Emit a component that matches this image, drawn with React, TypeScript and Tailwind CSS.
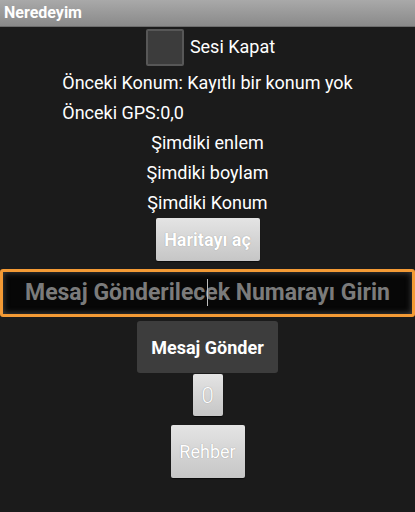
import React from 'react'

const font = { fontFamily: 'Roboto, "Noto Sans", sans-serif' }

function LightButton({ children, className }: { children: React.ReactNode; className: string }) {
  return (
    <div
      className={`flex items-center justify-center rounded-[2px] bg-gradient-to-b from-[#e4e4e4] to-[#c6c6c6] text-white [text-shadow:0_0_1px_rgba(0,0,0,0.35)] shadow-[0_1px_1px_rgba(0,0,0,0.6)] ${className}`}
    >
      {children}
    </div>
  )
}

export default function App() {
  return (
    <div className="w-[415px] h-[512px] bg-[#1b1b1b] overflow-hidden text-white" style={font}>
      {/* title bar */}
      <div className="h-[27px] bg-gradient-to-b from-[#a9a9a9] to-[#8a8a8a] border-b border-[#6d6d6d] flex items-center pl-[4px]">
        <span className="text-[16px] font-bold text-white leading-none">Neredeyim</span>
      </div>

      <div className="flex flex-col items-center">
        {/* checkbox */}
        <div className="flex items-center h-[38px] mt-[1px] mr-[-6px]">
          <div className="w-[38px] h-[37px] rounded-[2px] border-2 border-[#575757] bg-[#3c3c3c]" />
          <span className="ml-[6px] text-[18px] leading-none">Sesi Kapat</span>
        </div>

        <div className="flex flex-col mt-[1px]">
          <div className="h-[30px] flex items-center text-[18px]">Önceki Konum: Kayıtlı bir konum yok</div>
          <div className="h-[30px] flex items-center text-[18px]">Önceki GPS:0,0</div>
        </div>
        <div className="h-[30px] flex items-center text-[18px]">Şimdiki enlem</div>
        <div className="h-[30px] flex items-center text-[18px]">Şimdiki boylam</div>
        <div className="h-[30px] flex items-center text-[18px]">Şimdiki Konum</div>

        <LightButton className="w-[104px] h-[43px] mt-[1px] text-[18px] font-bold">Haritayı aç</LightButton>

        {/* input */}
        <div className="w-[415px] h-[48px] mt-[8px] rounded-[3px] border-[3px] border-[#f39a35] bg-[#070707] shadow-[inset_0_0_6px_rgba(120,120,120,0.6)] flex items-center justify-center relative">
          <span className="text-[23px] font-bold text-[#7b7b7b] leading-none mb-[2px]">Mesaj Gönderilecek Numarayı Girin</span>
          <div className="absolute left-[204px] top-[7px] w-[1px] h-[27px] bg-[#bdbdbd]" />
        </div>

        <div className="w-[141px] h-[52px] mt-[4px] rounded-[3px] bg-[#3d3d3d] flex items-center justify-center text-[18px] font-bold">
          Mesaj Gönder
        </div>

        <LightButton className="w-[30px] h-[42px] mt-[1px] text-[22px] font-light">0</LightButton>

        <LightButton className="w-[74px] h-[53px] mt-[9px] text-[18px]">Rehber</LightButton>
      </div>
    </div>
  )
}
